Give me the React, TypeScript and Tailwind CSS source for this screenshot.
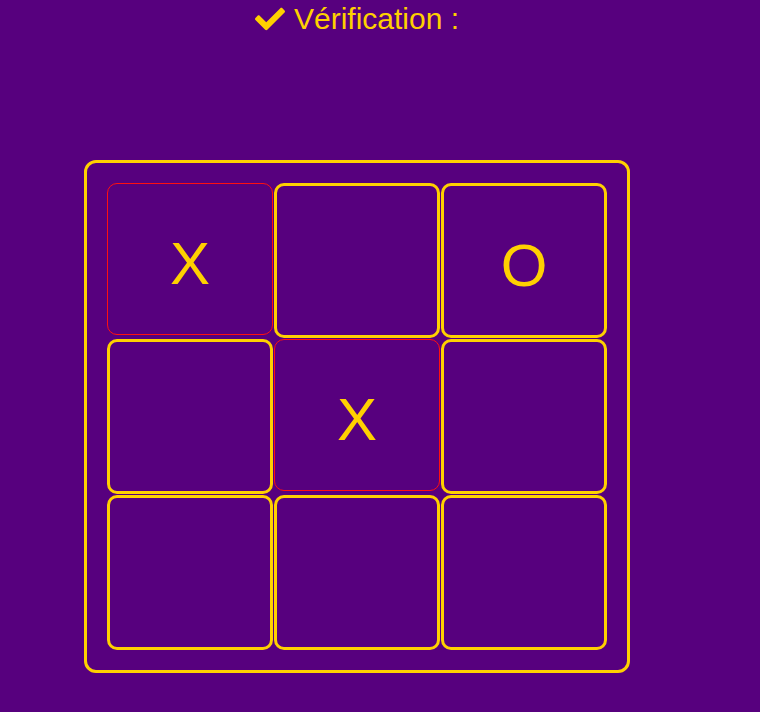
import React from "react";

type Cell = { value: string; highlight?: boolean };

const cells: Cell[] = [
  { value: "X", highlight: true },
  { value: "" },
  { value: "O" },
  { value: "" },
  { value: "X", highlight: true },
  { value: "" },
  { value: "" },
  { value: "" },
  { value: "" },
];

const CheckIcon = () => (
  <svg viewBox="0 0 512 512" className="w-[30px] h-[30px] shrink-0" fill="#ffd000">
    <path d="M173.898 439.404l-166.4-166.4c-9.997-9.997-9.997-26.206 0-36.204l36.203-36.204c9.997-9.998 26.207-9.998 36.204 0L192 312.69 432.095 72.596c9.997-9.997 26.207-9.997 36.204 0l36.203 36.204c9.997 9.997 9.997 26.206 0 36.204l-294.4 294.401c-9.998 9.997-26.207 9.997-36.204-.001z" />
  </svg>
);

export default function App() {
  return (
    <div
      className="min-h-screen w-full bg-[#57007e] text-[#ffd000]"
      style={{ fontFamily: '"Liberation Sans", Arial, sans-serif' }}
    >
      <div className="ml-[84px] w-[546px] flex flex-col items-center">
        {/* Verification header */}
        <div className="flex items-center gap-[9px] pt-[2px] text-[30px] leading-[34px]">
          <CheckIcon />
          <span>Vérification :</span>
        </div>

        {/* Board */}
        <div className="mt-[124px] w-[546px] h-[513px] border-[3px] border-[#ffd000] rounded-xl p-[20px]">
          <div className="grid grid-cols-[166px_166px_166px] grid-rows-[155px_155px_155px] gap-[1px]">
            {cells.map((c, i) => (
              <div
                key={i}
                className={
                  c.highlight
                    ? "self-start h-[152px] border border-[#ff1010] rounded-[10px] flex items-center justify-center pt-[10px] text-[60px] leading-none"
                    : "border-[3px] border-[#ffd000] rounded-[10px] flex items-center justify-center pt-[10px] text-[60px] leading-none"
                }
              >
                {c.value}
              </div>
            ))}
          </div>
        </div>
      </div>
    </div>
  );
}
